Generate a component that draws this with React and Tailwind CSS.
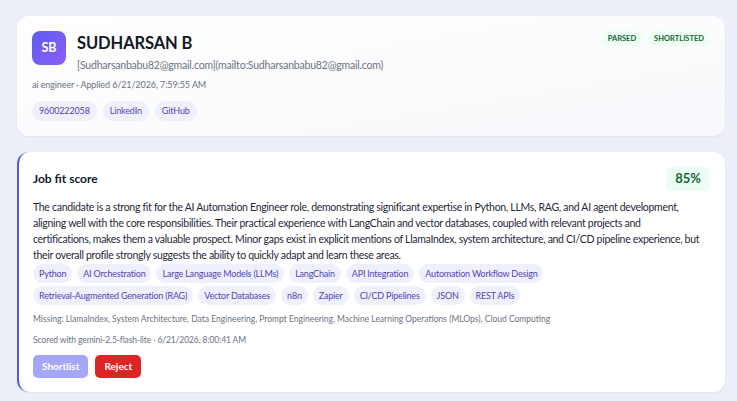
import React from "react";

const skillRows = [
  [
    "Python",
    "AI Orchestration",
    "Large Language Models (LLMs)",
    "LangChain",
    "API Integration",
    "Automation Workflow Design",
  ],
  [
    "Retrieval-Augmented Generation (RAG)",
    "Vector Databases",
    "n8n",
    "Zapier",
    "CI/CD Pipelines",
    "JSON",
    "REST APIs",
  ],
];

export default function App() {
  return (
    <div
      className="min-h-[401px] w-full bg-[#eceef8] px-[17px] pt-[16px] pb-[10px] text-[#1f2937]"
      style={{ fontFamily: "Lato, 'Noto Sans', sans-serif" }}
    >
      <div className="flex flex-col gap-[16px] w-[708px]">
        {/* Candidate card */}
        <div className="rounded-[12px] bg-gradient-to-br from-white to-[#f7f8fb] shadow-[0_1px_2px_rgba(30,40,90,0.06)] px-[15px] pt-[15px] pb-[15px]">
          <div className="flex items-start justify-between">
            <div className="flex items-start gap-[11px]">
              <div className="w-[34px] h-[34px] rounded-[8px] bg-gradient-to-br from-[#5b5ff0] to-[#8b5cf6] flex items-center justify-center text-white font-bold text-[12.5px]">
                SB
              </div>
              <div className="flex flex-col">
                <div className="text-[16.5px] font-bold text-[#111827] leading-[20px] mt-[2px] tracking-[-0.1px]">SUDHARSAN B</div>
                <div className="text-[10.5px] text-[#6b7280] mt-[5px] leading-[14px] tracking-[-0.2px]">
                  [Sudharsanbabu82@gmail.com](mailto:Sudharsanbabu82@gmail.com)
                </div>
              </div>
            </div>
            <div className="flex gap-[6px] mr-[0px]">
              <span className="rounded-full bg-[#ecfdf3] text-[#166534] text-[7.5px] font-bold px-[6px] py-[3px] leading-[9px]">
                PARSED
              </span>
              <span className="rounded-full bg-[#ecfdf3] text-[#166534] text-[7.5px] font-bold px-[6px] py-[3px] leading-[9px]">
                SHORTLISTED
              </span>
            </div>
          </div>
          <div className="mt-[7px] text-[9px] text-[#6b7280] leading-[12px] tracking-[-0.1px]">
            ai engineer · Applied 6/21/2026, 7:59:55 AM
          </div>
          <div className="mt-[10px] flex gap-[6px]">
            {["9600222058", "LinkedIn", "GitHub"].map((t) => (
              <span
                key={t}
                className="rounded-full bg-[#eef0fc] text-[#4f46b8] text-[9px] tracking-[-0.15px] px-[7px] h-[20px] flex items-center"
              >
                {t}
              </span>
            ))}
          </div>
        </div>

        {/* Job fit card */}
        <div className="rounded-[12px] bg-white border-l-2 border-[#5b57d9] shadow-[0_1px_2px_rgba(30,40,90,0.06)] pl-[14px] pr-[15px] pt-[15px] pb-[14px]">
          <div className="flex items-center justify-between">
            <div className="text-[12px] font-bold text-[#111827]">Job fit score</div>
            <div className="rounded-[6px] bg-[#ecfdf3] text-[#166534] font-bold text-[13px] px-[9px] h-[24px] flex items-center">
              85%
            </div>
          </div>
          <p className="mt-[8px] text-[10.5px] leading-[16px] tracking-[-0.3px] text-[#1f2937] whitespace-nowrap">
            The candidate is a strong fit for the AI Automation Engineer role, demonstrating significant expertise in Python, LLMs, RAG, and AI agent development,
            <br />
            aligning well with the core responsibilities. Their practical experience with LangChain and vector databases, coupled with relevant projects and
            <br />
            certifications, makes them a valuable prospect. Minor gaps exist in explicit mentions of LlamaIndex, system architecture, and CI/CD pipeline experience, but
            <br />
            their overall profile strongly suggests the ability to quickly adapt and learn these areas.
          </p>
          <div className="mt-[1px] flex flex-col gap-[3px]">
            {skillRows.map((row, i) => (
              <div key={i} className="flex gap-[5px]">
                {row.map((s) => (
                  <span
                    key={s}
                    className="rounded-full bg-[#eef0fc] text-[#4f46b8] text-[9px] tracking-[-0.2px] px-[6px] h-[19px] flex items-center"
                  >
                    {s}
                  </span>
                ))}
              </div>
            ))}
          </div>
          <div className="mt-[8px] text-[8.5px] text-[#6b7280] leading-[12px]">
            Missing: LlamaIndex, System Architecture, Data Engineering, Prompt Engineering, Machine Learning Operations (MLOps), Cloud Computing
          </div>
          <div className="mt-[9px] text-[8.5px] text-[#6b7280] leading-[12px] tracking-[-0.1px]">
            Scored with gemini-2.5-flash-lite · 6/21/2026, 8:00:41 AM
          </div>
          <div className="mt-[9px] flex gap-[7px]">
            <button className="rounded-[5px] bg-[#a5a6f6] text-white text-[10px] font-bold px-[9px] h-[23px]">
              Shortlist
            </button>
            <button className="rounded-[5px] bg-[#dc2626] text-white text-[10px] font-bold px-[9px] h-[23px]">
              Reject
            </button>
          </div>
        </div>
      </div>
    </div>
  );
}
